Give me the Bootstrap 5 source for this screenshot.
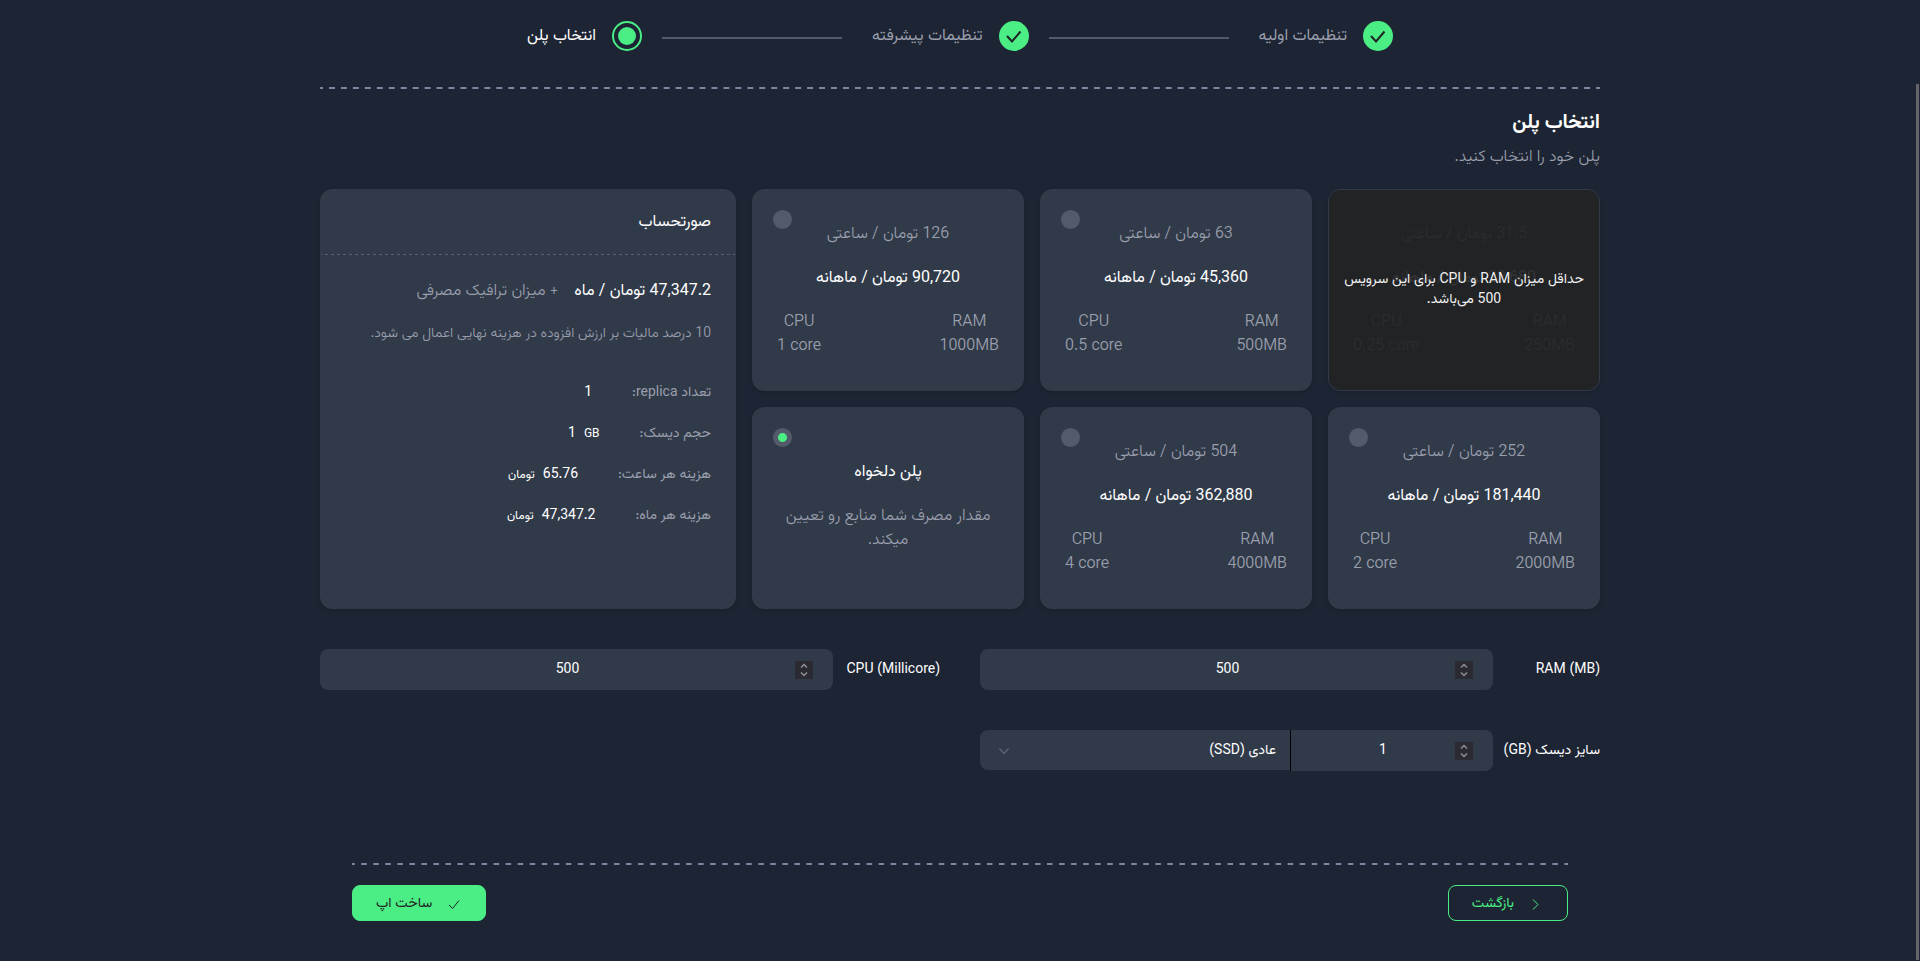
<!DOCTYPE html>
<html lang="fa" dir="rtl">
<head>
<meta charset="utf-8">
<meta name="viewport" content="width=device-width, initial-scale=1">
<title>انتخاب پلن</title>
<link href="https://cdn.jsdelivr.net/npm/bootstrap@5.3.0/dist/css/bootstrap.min.css" rel="stylesheet">
<style>
:root{--page:#1d2433;--surface:#313a49;--ink:#fff;--soft:#9a9fad;--green:#4aee85;--rule:#7a87a0;--dot:#535b6b}
body{background:var(--page);color:var(--ink);font-family:Vazirmatn,Roboto,"Noto Sans Arabic","DejaVu Sans",sans-serif;font-size:16px;line-height:24px}
.shell{max-width:1280px}
.soft{color:var(--soft)}
.thin{font-weight:300}
.fs14{font-size:14px}
.fs12{font-size:12px}
.dash{height:2px;background:linear-gradient(90deg,var(--rule) 25%,transparent 25% 75%,var(--rule) 75%) 0 0/12px 2px round}
.dash-thin{height:1px;background:linear-gradient(90deg,#556070 25%,transparent 25% 75%,#556070 75%) 0 0/6px 1px round}
.steps{padding-top:21px;padding-bottom:36px;gap:20px}
.steps span{padding-top:1px}
.step-line{width:180px;height:2px;background:#535b6b;margin:3px 10px 0 0}
.title{font-size:20px;line-height:24px;padding-top:22px;margin-bottom:11px}
.subtitle{margin-bottom:19px}
.main-grid{display:grid;grid-template-columns:minmax(0,848fr) minmax(0,416fr);gap:16px}
.plans{display:grid;grid-template-columns:repeat(3,minmax(0,1fr));grid-auto-rows:202px;gap:16px}
.tile{background:var(--surface);border:1px solid var(--surface);border-radius:12px;box-shadow:0 2px 4px rgba(0,0,0,.12)}
.plan{padding:33px 24px 24px;text-align:center}
.plan input{appearance:none;position:absolute;left:20px;top:20px;width:19px;height:19px;border-radius:50%;background:var(--dot);margin:0}
.plan input:checked{background:radial-gradient(circle,var(--green) 0 4px,var(--dot) 5px)}
.own-title{padding-top:20px}
.plan.blocked{background:#212325}
.plan.blocked .content{opacity:.08}
.veil{font-size:14px;line-height:20px;color:#f1f1f1;padding:0 12px}
.bill-head{padding:21px 24px 19px}
.bill-body{padding:25px 24px}
.bill-note{padding-top:18px;padding-bottom:26px}
.bill-row{height:41px;gap:40px}
.fields{display:grid;grid-template-columns:repeat(2,minmax(0,1fr));gap:40px}
.field{display:grid;grid-template-columns:107px minmax(0,1fr)}
.field label{padding-top:9px}
.box{background:var(--surface);height:41px;border-radius:8px;padding:0 20px}
.box input{min-width:0;width:100%;height:36px;background:none;border:0;color:var(--ink);text-align:center;font-size:14px;padding:0;appearance:textfield}
.box input::-webkit-inner-spin-button{appearance:none}
.spin{width:18px;height:18px;background:#2b2a33;flex:none}
.disk{grid-template-columns:202px minmax(0,1fr);display:grid}
.disk .box{border-radius:0 8px 8px 0}
.kind{height:41px;border-right:1px solid #000;position:relative}
.kind select{appearance:none;width:100%;height:40px;border:0;border-radius:8px 0 0 8px;background:var(--surface);color:var(--ink);font-size:14px;padding:1px 14px 0 40px}
.kind svg{position:absolute;left:19px;top:17px;pointer-events:none}
.foot{padding:0 32px;margin-top:92px}
.act{height:36px;border-radius:8px;font-size:14px;line-height:20px;padding:1px 23px 0;gap:14px;color:#212325;background:var(--green);border:1px solid var(--green)}
.act.line{background:none;color:var(--green)}
.act:hover{background:#3fdc78;color:#212325}
.rail{right:1px;top:84px;bottom:1px;width:3px;background:#64646a}
</style>
</head>
<body>
<div class="shell mx-auto">
  <nav class="steps d-flex justify-content-center align-items-center">
    <div class="d-flex align-items-center gap-3">
      <svg width="30" height="30" viewBox="0 0 30 30"><circle cx="15" cy="15" r="15" fill="#4aee85"/><path d="M8 15l5 5.500 8.500-10" fill="none" stroke="#212325" stroke-width="2"/></svg>
      <span class="soft">تنظیمات اولیه</span>
    </div>
    <div class="step-line"></div>
    <div class="d-flex align-items-center gap-3">
      <svg width="30" height="30" viewBox="0 0 30 30"><circle cx="15" cy="15" r="15" fill="#4aee85"/><path d="M8 15l5 5.500 8.500-10" fill="none" stroke="#212325" stroke-width="2"/></svg>
      <span class="soft">تنظیمات پیشرفته</span>
    </div>
    <div class="step-line"></div>
    <div class="d-flex align-items-center gap-3">
      <svg width="30" height="30" viewBox="0 0 30 30"><circle cx="15" cy="15" r="14" fill="none" stroke="#4aee85" stroke-width="2"/><circle cx="15" cy="15" r="9" fill="#4aee85"/></svg>
      <span>انتخاب پلن</span>
    </div>
  </nav>
  <div class="dash"></div>

  <form>
  <h1 class="title fw-bold">انتخاب پلن</h1>
  <p class="subtitle soft thin">پلن خود را انتخاب کنید.</p>

  <div class="main-grid">
    <div class="plans">
      <div class="tile plan blocked position-relative">
        <div class="content">
          <div class="soft thin">31.5 تومان / ساعتی</div>
          <div class="my-3 pt-1">22,680 تومان / ماهانه</div>
          <div class="soft thin d-flex justify-content-between pt-1"><div>RAM<br>250MB</div><div dir="ltr">CPU<br>0.25 core</div></div>
        </div>
        <div class="veil position-absolute top-0 start-0 w-100 h-100 d-flex align-items-center">حداقل میزان RAM و CPU برای این سرویس 500 می‌باشد.</div>
      </div>
      <label class="tile plan position-relative">
        <input type="radio" name="plan">
        <span class="d-block soft thin">63 تومان / ساعتی</span>
        <span class="d-block my-3 pt-1">45,360 تومان / ماهانه</span>
        <span class="soft thin d-flex justify-content-between pt-1"><span>RAM<br>500MB</span><span dir="ltr">CPU<br>0.5 core</span></span>
      </label>
      <label class="tile plan position-relative">
        <input type="radio" name="plan">
        <span class="d-block soft thin">126 تومان / ساعتی</span>
        <span class="d-block my-3 pt-1">90,720 تومان / ماهانه</span>
        <span class="soft thin d-flex justify-content-between pt-1"><span>RAM<br>1000MB</span><span dir="ltr">CPU<br>1 core</span></span>
      </label>
      <label class="tile plan position-relative">
        <input type="radio" name="plan">
        <span class="d-block soft thin">252 تومان / ساعتی</span>
        <span class="d-block my-3 pt-1">181,440 تومان / ماهانه</span>
        <span class="soft thin d-flex justify-content-between pt-1"><span>RAM<br>2000MB</span><span dir="ltr">CPU<br>2 core</span></span>
      </label>
      <label class="tile plan position-relative">
        <input type="radio" name="plan">
        <span class="d-block soft thin">504 تومان / ساعتی</span>
        <span class="d-block my-3 pt-1">362,880 تومان / ماهانه</span>
        <span class="soft thin d-flex justify-content-between pt-1"><span>RAM<br>4000MB</span><span dir="ltr">CPU<br>4 core</span></span>
      </label>
      <label class="tile plan position-relative">
        <input type="radio" name="plan" checked>
        <span class="d-block own-title">پلن دلخواه</span>
        <span class="d-block soft thin pt-3 mt-1">مقدار مصرف شما منابع رو تعیین میکند.</span>
      </label>
    </div>

    <section class="tile">
      <h2 class="bill-head fs-6 fw-normal lh-base m-0">صورتحساب</h2>
      <div class="dash-thin"></div>
      <div class="bill-body">
        <div class="d-flex gap-3"><span>47,347.2 تومان / ماه</span><span class="soft thin">+ میزان ترافیک مصرفی</span></div>
        <p class="bill-note soft thin fs14 mb-0">10 درصد مالیات بر ارزش افزوده در هزینه نهایی اعمال می شود.</p>
        <div class="bill-row d-flex align-items-center fs14"><span class="soft">تعداد replica:</span><span>1</span></div>
        <div class="bill-row d-flex align-items-center fs14"><span class="soft">حجم دیسک:</span><span class="d-flex gap-2"><span class="fs12">GB</span><span>1</span></span></div>
        <div class="bill-row d-flex align-items-center fs14"><span class="soft">هزینه هر ساعت:</span><span class="d-flex gap-2"><span>65.76</span><span class="fs12">تومان</span></span></div>
        <div class="bill-row d-flex align-items-center fs14"><span class="soft">هزینه هر ماه:</span><span class="d-flex gap-2"><span>47,347.2</span><span class="fs12">تومان</span></span></div>
      </div>
    </section>
  </div>

  <div class="fields fs14 pt-4 mt-3">
    <div class="field">
      <label for="ram" dir="ltr" class="text-end">RAM (MB)</label>
      <div class="box d-flex align-items-center">
        <svg class="spin" viewBox="0 0 18 18"><path d="M6 6.500l3-3 3 3M6 11.500l3 3 3-3" fill="none" stroke="#8f8f98" stroke-width="1.500"/></svg>
        <input id="ram" type="number" value="500">
      </div>
    </div>
    <div class="field">
      <label for="cpu" dir="ltr" class="text-end">CPU (Millicore)</label>
      <div class="box d-flex align-items-center">
        <svg class="spin" viewBox="0 0 18 18"><path d="M6 6.500l3-3 3 3M6 11.500l3 3 3-3" fill="none" stroke="#8f8f98" stroke-width="1.500"/></svg>
        <input id="cpu" type="number" value="500">
      </div>
    </div>
    <div class="field">
      <label for="disk">سایز دیسک (GB)</label>
      <div class="disk">
        <div class="box d-flex align-items-center">
          <svg class="spin" viewBox="0 0 18 18"><path d="M6 6.500l3-3 3 3M6 11.500l3 3 3-3" fill="none" stroke="#8f8f98" stroke-width="1.500"/></svg>
          <input id="disk" type="number" value="1">
        </div>
        <div class="kind">
          <select aria-label="نوع دیسک"><option>عادی (SSD)</option></select>
          <svg width="10" height="8" viewBox="0 0 10 8"><path d="M.5 1.500L5 6.500l4.500-5" fill="none" stroke="#5d6676" stroke-width="1.200"/></svg>
        </div>
      </div>
    </div>
  </div>

  <div class="foot">
    <div class="dash"></div>
    <div class="d-flex justify-content-between pt-3 mt-1">
      <button type="button" class="btn act line d-flex align-items-center"><svg width="16" height="16" viewBox="0 0 16 16"><path d="M5 3.500l5 5-5 5" fill="none" stroke="currentColor"/></svg>بازگشت</button>
      <button type="submit" class="btn act d-flex align-items-center"><svg width="16" height="16" viewBox="0 0 16 16"><path d="M3 9l3.500 3.500L13 4.500" fill="none" stroke="currentColor"/></svg>ساخت اپ</button>
    </div>
  </div>
  </form>
</div>
<div class="rail position-fixed"></div>
<script src="https://cdn.jsdelivr.net/npm/bootstrap@5.3.0/dist/js/bootstrap.bundle.min.js"></script>
</body>
</html>
